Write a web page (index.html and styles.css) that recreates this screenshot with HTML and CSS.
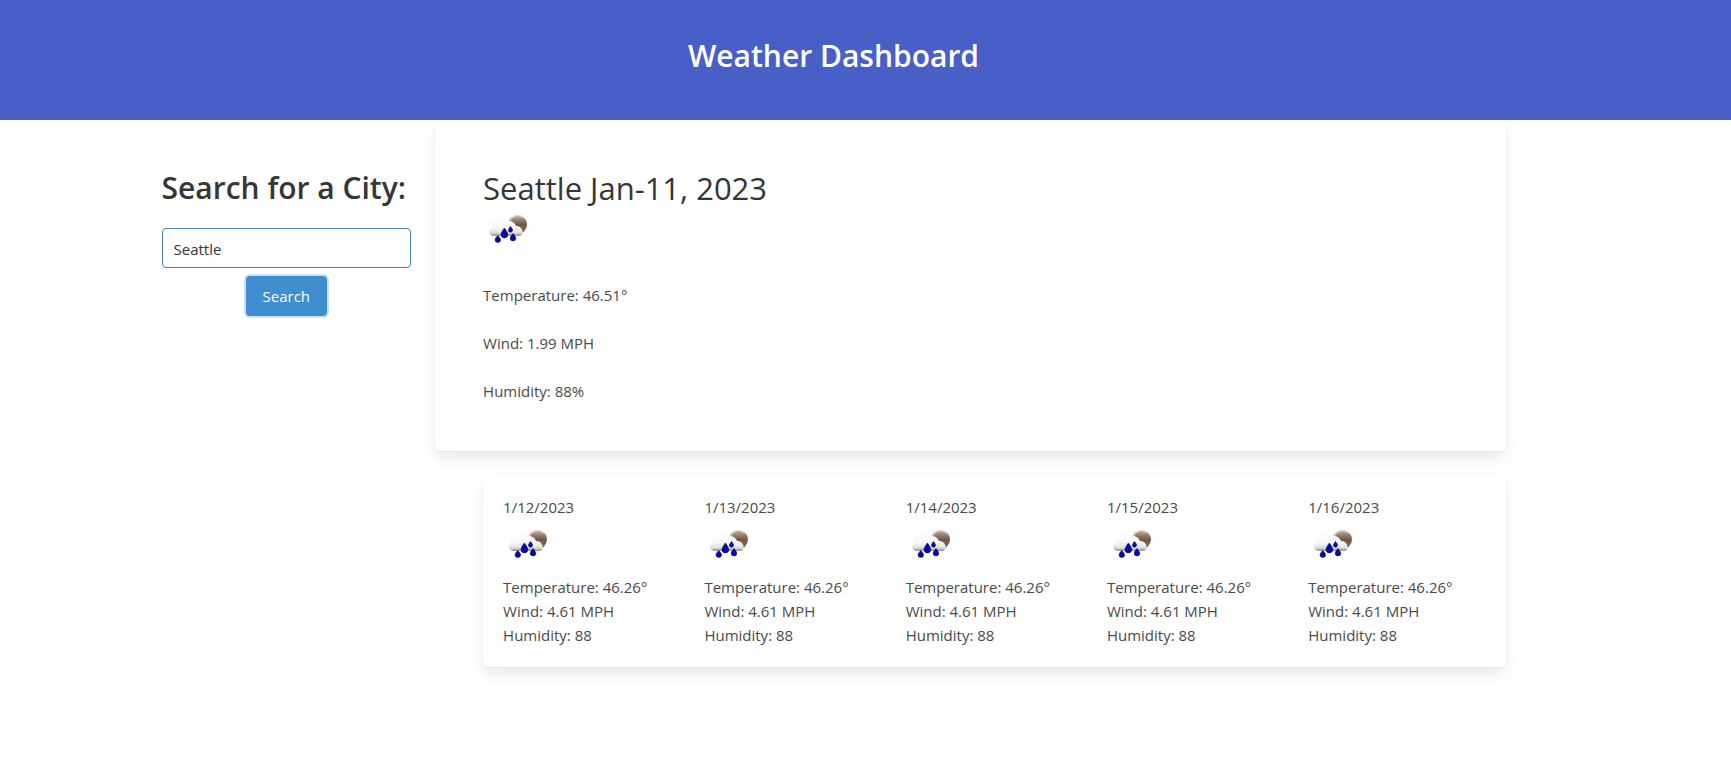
FILE: index.html
```html
<!DOCTYPE html>
<html lang="en">
<head>
<meta charset="utf-8">
<title>Weather Dashboard</title>
<link rel="stylesheet" href="styles.css">
</head>
<body>
<svg class="defs" width="0" height="0" aria-hidden="true">
  <defs>
    <linearGradient id="cloud" x1="0" y1="0" x2="0" y2="1">
      <stop offset="0" stop-color="#fefefe"/><stop offset=".5" stop-color="#f8f8f8"/><stop offset=".8" stop-color="#e4e4e4"/><stop offset="1" stop-color="#909090"/>
    </linearGradient>
    <linearGradient id="moon" x1="0" y1="0" x2="0" y2="1">
      <stop offset="0" stop-color="#c9b8aa"/><stop offset=".3" stop-color="#927a68"/><stop offset=".5" stop-color="#725845"/><stop offset="1" stop-color="#8a6d52"/>
    </linearGradient>
    <symbol id="rain-night" viewBox="0 0 50 50">
      <circle cx="34.5" cy="20.5" r="9.5" fill="url(#moon)"/>
      <path d="M26.500 18a8.500 8.500 0 0 1 14-4" fill="none" stroke="#eee5de" stroke-width="1"/>
      <path d="M10 32Q6 31 6 27Q6 24 8.500 22.500Q8 18 11.500 16Q14 13 18 14Q23 12.500 25.500 17Q31 17 33 22Q38 22 39.500 27Q40 31 37 32Z" fill="url(#cloud)"/>
      <g fill="#0808a8" stroke="#05056c" stroke-width=".6">
        <path d="M21.400 24Q18 28.500 18 30.500A3.400 3.400 0 0 0 24.800 30.500Q24.800 28.500 21.400 24Z"/>
        <path d="M14.800 31.500Q12 34.500 12 35.800A2.800 2.600 0 0 0 17.600 35.800Q17.600 34.500 14.800 31.500Z"/>
        <path d="M30 29.500Q27.200 32.800 27.200 34.200A2.800 2.700 0 0 0 32.800 34.200Q32.800 32.800 30 29.500Z"/>
        <path d="M27.500 22.500Q25.500 25 25.500 26.200A2 2 0 0 0 29.500 26.200Q29.500 25 27.500 22.500Z"/>
      </g>
    </symbol>
  </defs>
</svg>
<header class="hero"><h1 class="title">Weather Dashboard</h1></header>
<main class="layout">
  <form class="search">
    <label class="title" for="city">Search for a City:</label>
    <input class="input" id="city" type="text" value="Seattle">
    <button class="button" type="button">Search</button>
  </form>
  <div class="results">
    <section class="box current">
      <h2 class="place">Seattle Jan-11, 2023</h2>
      <svg class="icon" role="img" aria-label="Rain"><use href="#rain-night"/></svg>
      <p>Temperature: 46.51°</p>
      <p>Wind: 1.99 MPH</p>
      <p>Humidity: 88%</p>
    </section>
    <section class="box forecast">
      <article><p>1/12/2023</p><svg class="icon" role="img" aria-label="Rain"><use href="#rain-night"/></svg><p>Temperature: 46.26°</p><p>Wind: 4.61 MPH</p><p>Humidity: 88</p></article>
      <article><p>1/13/2023</p><svg class="icon" role="img" aria-label="Rain"><use href="#rain-night"/></svg><p>Temperature: 46.26°</p><p>Wind: 4.61 MPH</p><p>Humidity: 88</p></article>
      <article><p>1/14/2023</p><svg class="icon" role="img" aria-label="Rain"><use href="#rain-night"/></svg><p>Temperature: 46.26°</p><p>Wind: 4.61 MPH</p><p>Humidity: 88</p></article>
      <article><p>1/15/2023</p><svg class="icon" role="img" aria-label="Rain"><use href="#rain-night"/></svg><p>Temperature: 46.26°</p><p>Wind: 4.61 MPH</p><p>Humidity: 88</p></article>
      <article><p>1/16/2023</p><svg class="icon" role="img" aria-label="Rain"><use href="#rain-night"/></svg><p>Temperature: 46.26°</p><p>Wind: 4.61 MPH</p><p>Humidity: 88</p></article>
    </section>
  </div>
</main>
</body>
</html>
```
FILE: styles.css
```css
* { box-sizing: border-box; }
body {
  margin: 0;
  background: #fff;
  color: #4a4a4a;
  font: 15px/24px "Open Sans", "Noto Sans", sans-serif;
}
h1, h2, p { margin: 0; }
.defs { position: absolute; }
.title { font-size: 30px; line-height: 40px; font-weight: 600; color: #363636; white-space: nowrap; }
.hero { position: relative; background: #485fc7; padding: 36px 64px 44px 0; text-align: center; }
.hero .title { color: #fff; }
.layout {
  max-width: 1408px;
  margin: 0 auto;
  padding: 0 64px 48px 0;
  display: grid;
  grid-template-columns: repeat(5, minmax(0, 1fr));
  gap: 24px;
}
.search { display: flex; flex-direction: column; align-items: center; padding-top: 48px; }
.search .title { align-self: flex-start; margin-bottom: 20px; }
.input {
  width: 100%;
  height: 40px;
  padding: 2px 11px 0;
  border: 1px solid #4585bd;
  border-radius: 4px;
  background: #fff;
  color: #363636;
  font: inherit;
}
.button {
  height: 40px;
  margin-top: 8px;
  padding: 0 17px;
  border: 0;
  border-radius: 4px;
  background: #3e8ed0;
  box-shadow: 0 0 0 2px #cbe0f2;
  color: #fff;
  font: inherit;
}
.results { grid-column: span 4; display: flex; flex-direction: column; gap: 24px; }
.box {
  border-radius: 6px;
  background: #fff;
  box-shadow: 0 8px 16px -2px rgba(10, 10, 10, .1), 0 0 0 1px rgba(10, 10, 10, .02);
}
.icon { display: block; width: 50px; height: 50px; margin-bottom: 6px; }
.current { padding: 48px; }
.place { font-size: 31px; line-height: 40px; font-weight: 400; color: #363636; }
.current .icon { margin: -4px 0 29px; }
.current p + p { margin-top: 24px; }
.forecast {
  margin-left: 48px;
  padding: 20px;
  display: grid;
  grid-template-columns: repeat(5, minmax(0, 1fr));
  gap: 24px;
}
```
